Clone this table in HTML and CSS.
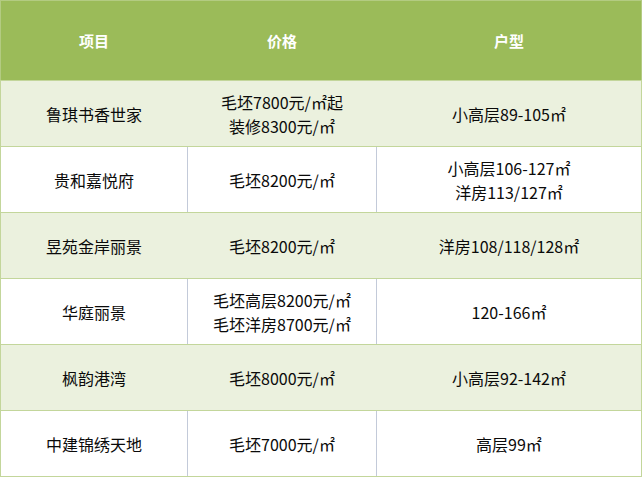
FILE: index.html
```html
<!DOCTYPE html>
<html lang="zh-CN">
<head>
<meta charset="utf-8">
<link rel="stylesheet" href="styles.css">
</head>
<body>
<div class="table">
  <div class="row head">
    <div class="cell">项目</div>
    <div class="cell">价格</div>
    <div class="cell">户型</div>
  </div>
  <div class="row alt">
    <div class="cell">鲁琪书香世家</div>
    <div class="cell">毛坯7800元/㎡起<br>装修8300元/㎡</div>
    <div class="cell">小高层89-105㎡</div>
  </div>
  <div class="row">
    <div class="cell">贵和嘉悦府</div>
    <div class="cell">毛坯8200元/㎡</div>
    <div class="cell">小高层106-127㎡<br>洋房113/127㎡</div>
  </div>
  <div class="row alt">
    <div class="cell">昱苑金岸丽景</div>
    <div class="cell">毛坯8200元/㎡</div>
    <div class="cell">洋房108/118/128㎡</div>
  </div>
  <div class="row">
    <div class="cell">华庭丽景</div>
    <div class="cell">毛坯高层8200元/㎡<br>毛坯洋房8700元/㎡</div>
    <div class="cell">120-166㎡</div>
  </div>
  <div class="row alt">
    <div class="cell">枫韵港湾</div>
    <div class="cell">毛坯8000元/㎡</div>
    <div class="cell">小高层92-142㎡</div>
  </div>
  <div class="row">
    <div class="cell">中建锦绣天地</div>
    <div class="cell">毛坯7000元/㎡</div>
    <div class="cell">高层99㎡</div>
  </div>
</div>
</body>
</html>
```
FILE: styles.css
```css
* { box-sizing: border-box; }
html, body { margin: 0; padding: 0; background: #ffffff; }
body {
  font-family: "Noto Sans CJK SC", "Noto Sans", sans-serif;
  font-size: 16px;
  color: #0a0a0a;
}
.table {
  width: 642px;
  display: flex;
  flex-direction: column;
}
.row {
  display: grid;
  grid-template-columns: 188px 189px 265px;
  height: 66px;
  border-bottom: 1px solid #c3d69b;
  background: #ffffff;
}
.row.head {
  height: 81px;
  background: #9bbb59;
  border-top: 1px solid #b3cb82;
  border-bottom-color: #c3d69b;
  color: #ffffff;
  font-weight: bold;
  font-size: 15px;
}
.row.alt { background: #ebf1de; }
.cell {
  display: flex;
  align-items: center;
  justify-content: center;
  text-align: center;
  line-height: 24px;
  border-right: 1px solid #c3cad9;
}
.cell:first-child { border-left: 1px solid #c3d69b; }
.cell:last-child { border-right-color: #c3d69b; }
.row.alt .cell:not(:last-child) { border-right-color: #ebf1de; }
.row.head .cell:not(:last-child) { border-right-color: #9bbb59; }
.row.head .cell:first-child { border-left-color: #b3cb82; }
.row.head .cell:last-child { border-right-color: #b3cb82; }
```
